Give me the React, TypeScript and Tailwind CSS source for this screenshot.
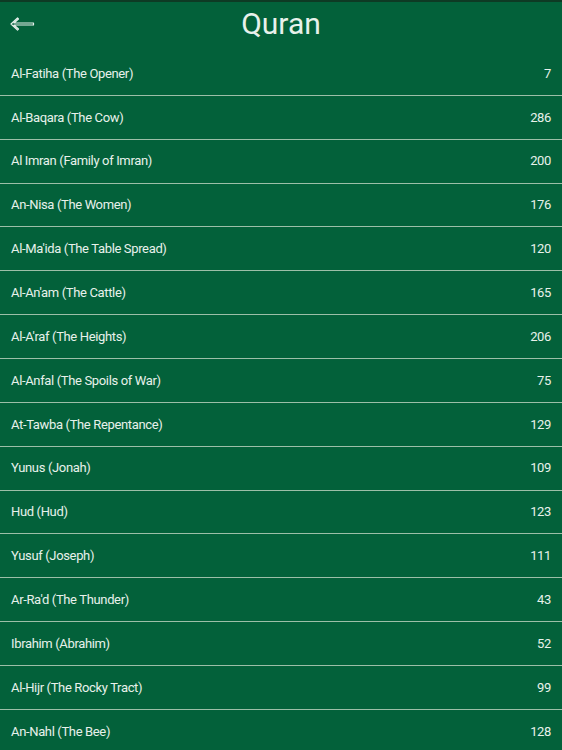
import React from 'react';

const surahs: [string, number][] = [
  ['Al-Fatiha (The Opener)', 7],
  ['Al-Baqara (The Cow)', 286],
  ['Al Imran (Family of Imran)', 200],
  ['An-Nisa (The Women)', 176],
  ["Al-Ma'ida (The Table Spread)", 120],
  ["Al-An'am (The Cattle)", 165],
  ["Al-A'raf (The Heights)", 206],
  ['Al-Anfal (The Spoils of War)', 75],
  ['At-Tawba (The Repentance)', 129],
  ['Yunus (Jonah)', 109],
  ['Hud (Hud)', 123],
  ['Yusuf (Joseph)', 111],
  ["Ar-Ra'd (The Thunder)", 43],
  ['Ibrahim (Abrahim)', 52],
  ['Al-Hijr (The Rocky Tract)', 99],
  ['An-Nahl (The Bee)', 128],
];

function BackArrow() {
  return (
    <svg width="25" height="14" viewBox="0 0 25 14" fill="none">
      <path
        d="M1 7 L7.5 1 L8.5 2 L4 6 L23.5 6 L23.5 8 L4 8 L8.5 12 L7.5 13 Z"
        stroke="#e6f0ea"
        strokeWidth="1.2"
        strokeLinejoin="round"
      />
    </svg>
  );
}

export default function App() {
  return (
    <div className="h-[750px] overflow-hidden bg-[#03613a] text-[#e8f1eb] font-['Roboto',sans-serif]">
      {/* Header */}
      <div className="relative h-[52px] border-t-2 border-[#0e3a24] flex items-center justify-center">
        <button className="absolute left-[10px] top-[15px]">
          <BackArrow />
        </button>
        <h1 className="text-[30px] leading-none -mt-[6px]">Quran</h1>
      </div>

      {/* List */}
      <div>
        {surahs.map(([name, verses]) => (
          <div
            key={name}
            className="h-[43.86px] flex items-center justify-between px-[11px] border-b border-[#9dbfa8] text-[13px] tracking-[-0.35px]"
          >
            <span>{name}</span>
            <span>{verses}</span>
          </div>
        ))}
      </div>
    </div>
  );
}
